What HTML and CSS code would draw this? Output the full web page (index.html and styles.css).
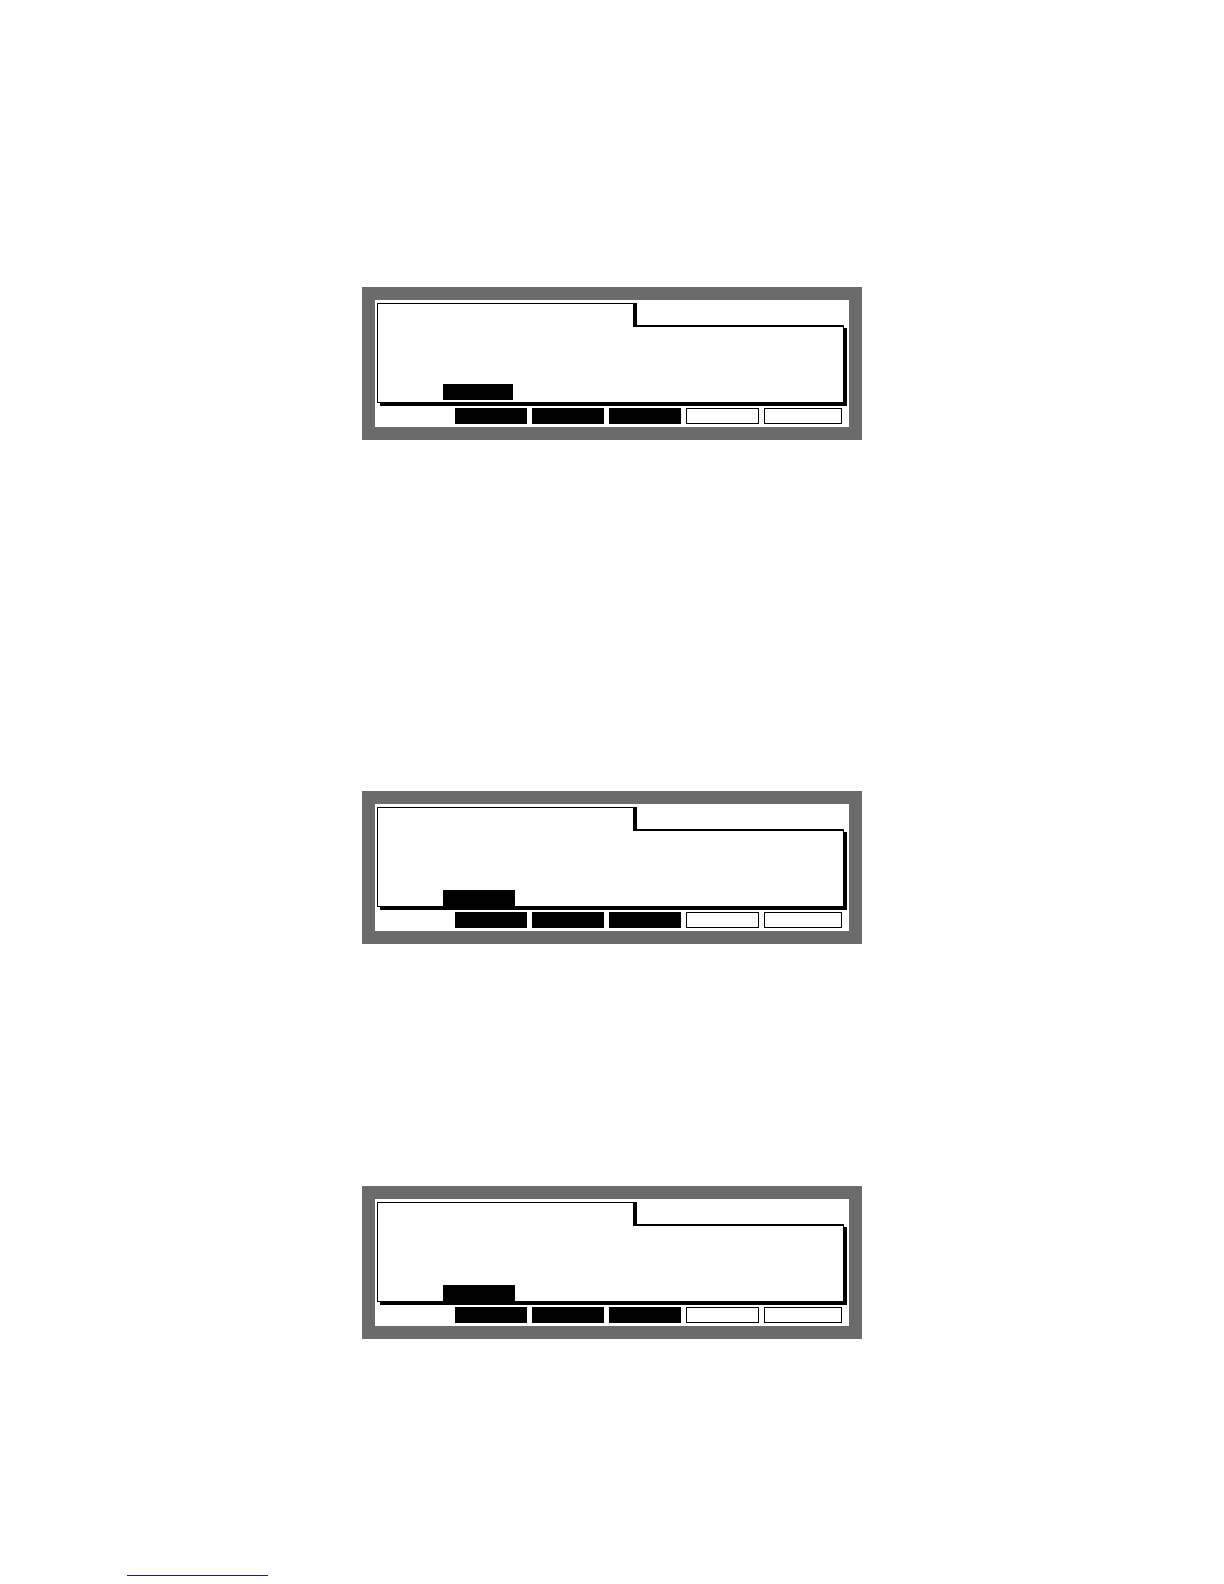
FILE: index.html
```html
<!DOCTYPE html>
<html lang="en">
<head>
<meta charset="utf-8">
<title>LCD screens</title>
<link rel="stylesheet" href="styles.css">
</head>
<body>
<main class="page">
  <section class="screen screen-1">
    <div class="lcd">
      <div class="panel">
        <div class="tab"></div>
        <div class="body body-raised">
          <div class="cursor"></div>
        </div>
      </div>
      <div class="keys">
        <span class="key key-on"></span>
        <span class="key key-on"></span>
        <span class="key key-on"></span>
        <span class="key key-off"></span>
        <span class="key key-off key-wide"></span>
      </div>
    </div>
  </section>

  <section class="screen screen-2">
    <div class="lcd">
      <div class="panel">
        <div class="tab"></div>
        <div class="body">
          <div class="cursor cursor-wide"></div>
        </div>
      </div>
      <div class="keys">
        <span class="key key-on"></span>
        <span class="key key-on"></span>
        <span class="key key-on"></span>
        <span class="key key-off"></span>
        <span class="key key-off key-wide"></span>
      </div>
    </div>
  </section>

  <section class="screen screen-3">
    <div class="lcd">
      <div class="panel">
        <div class="tab"></div>
        <div class="body">
          <div class="cursor cursor-wide"></div>
        </div>
      </div>
      <div class="keys">
        <span class="key key-on"></span>
        <span class="key key-on"></span>
        <span class="key key-on"></span>
        <span class="key key-off"></span>
        <span class="key key-off key-wide"></span>
      </div>
    </div>
  </section>

  <footer class="footnote-rule"></footer>
</main>
</body>
</html>
```

FILE: styles.css
```css
html, body {
  margin: 0;
  padding: 0;
  background: #ffffff;
  font-family: "Liberation Sans", Arial, sans-serif;
}

.page {
  width: 1224px;
  height: 1584px;
  padding-top: 287px;
  box-sizing: border-box;
  overflow: hidden;
}

.screen {
  width: 500px;
  margin-left: 362px;
  padding: 13px;
  box-sizing: border-box;
  background: #6b6b6b;
}

.screen-2 {
  margin-top: 351px;
}

.screen-3 {
  margin-top: 242px;
}

.lcd {
  height: 127px;
  box-sizing: border-box;
  background: #ffffff;
  padding: 3px 0 3px 2px;
}

.panel {
  width: 467px;
}

.tab {
  position: relative;
  z-index: 1;
  width: 260px;
  height: 24px;
  box-sizing: border-box;
  background: #ffffff;
  border-style: solid;
  border-color: #000000;
  border-width: 1px 4px 0 1px;
  margin-bottom: -2px;
}

.body {
  height: 78px;
  box-sizing: border-box;
  border-style: solid;
  border-color: #000000;
  border-width: 2px 1px 1px 1px;
  box-shadow: 3px 3px 0 #000000;
  display: flex;
  align-items: flex-end;
  padding-left: 65px;
}

.cursor {
  width: 70px;
  height: 16px;
  background: #000000;
}

.body-raised .cursor {
  margin-bottom: 2px;
}

.cursor-wide {
  width: 72px;
}

.keys {
  display: flex;
  gap: 5px;
  margin-top: 5px;
  margin-left: 78px;
}

.key {
  display: block;
  width: 72px;
  height: 16px;
  box-sizing: border-box;
}

.key-on {
  background: #000000;
}

.key-off {
  background: #ffffff;
  border: 1px solid #000000;
  width: 73px;
}

.key-wide {
  width: 78px;
}

.footnote-rule {
  width: 141px;
  margin-top: 236px;
  margin-left: 127px;
  border-top: 1px solid #1c1c84;
}
```
